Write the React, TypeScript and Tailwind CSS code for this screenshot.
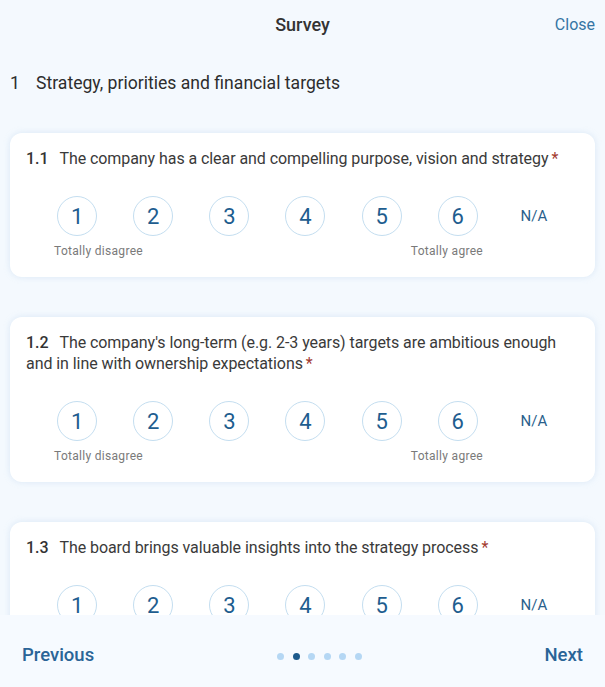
const questions = [
  {
    id: '1.1',
    text: 'The company has a clear and compelling purpose, vision and strategy',
  },
  {
    id: '1.2',
    text: "The company's long-term (e.g. 2-3 years) targets are ambitious enough and in line with ownership expectations",
  },
  {
    id: '1.3',
    text: 'The board brings valuable insights into the strategy process',
  },
]

function Scale() {
  return (
    <div className="ml-[13px] mt-[27px] grid w-[533px] grid-cols-7">
      {[1, 2, 3, 4, 5, 6].map((n) => (
        <div key={n} className="flex justify-center">
          <button className="flex h-[40px] w-[40px] items-center justify-center rounded-full border border-[#c4def0] bg-white text-[22px] text-[#1e5d8f]">
            {n}
          </button>
        </div>
      ))}
      <div className="flex items-center justify-center text-[15px] text-[#2b5f8c]">
        N/A
      </div>
    </div>
  )
}

function QuestionCard({ id, text }: { id: string; text: string }) {
  return (
    <div className="rounded-[12px] bg-white px-4 pb-[17px] pt-[15px] shadow-[0_0_6px_rgba(170,200,230,0.35)]">
      <p className="text-[16px] leading-[21px] tracking-[-0.07px] text-[#3a3a3a]">
        <span className="mr-[11px] font-medium text-[#333]">{id}</span>
        {text}
        <span className="ml-[3px] text-[#a33a30]">*</span>
      </p>
      <Scale />
      <div className="mt-[6px] flex justify-between pl-[28px] pr-[96px] text-[12px] tracking-[0.3px] text-[#7a7a7a]">
        <span>Totally disagree</span>
        <span>Totally agree</span>
      </div>
    </div>
  )
}

export default function App() {
  return (
    <div className="flex h-[687px] w-full flex-col overflow-hidden bg-[#f4f9fe] font-['Roboto',sans-serif]">
      <header className="relative flex h-[49px] shrink-0 items-center justify-center">
        <h1 className="text-[18px] font-medium text-[#333]">Survey</h1>
        <button className="absolute right-[10px] top-[13px] text-[16px] text-[#3676a4]">
          Close
        </button>
      </header>

      <div className="flex-1 overflow-hidden px-[10px]">
        <h2 className="mt-[21px] flex text-[17.6px] text-[#2d2d2d]">
          <span className="w-[26px]">1</span>
          Strategy, priorities and financial targets
        </h2>
        <div className="mt-[37px] flex flex-col gap-[40px]">
          {questions.map((q) => (
            <QuestionCard key={q.id} id={q.id} text={q.text} />
          ))}
        </div>
      </div>

      <footer className="flex h-[72px] shrink-0 items-center justify-between bg-[#f6faff] px-[22px] pt-[10px]">
        <button className="text-[18.5px] font-medium text-[#2a6497]">Previous</button>
        <div className="flex gap-[8.5px]">
          {[0, 1, 2, 3, 4, 5].map((i) => (
            <span
              key={i}
              className={
                i === 1
                  ? 'h-[7px] w-[7px] rounded-full bg-[#1d5a8c]'
                  : 'h-[7px] w-[7px] rounded-full bg-[#b5d7f4]'
              }
            />
          ))}
        </div>
        <button className="text-[18.5px] font-medium text-[#2a6497]">Next</button>
      </footer>
    </div>
  )
}
